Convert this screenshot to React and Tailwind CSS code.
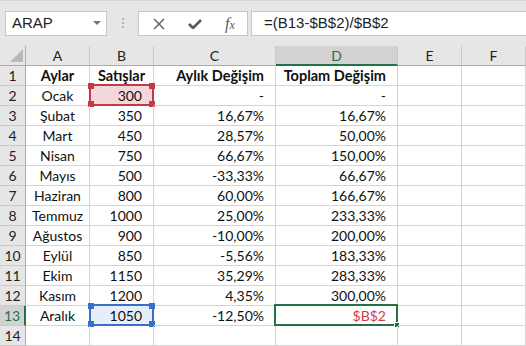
import React from "react";

const cols = [
  { key: "A", w: "w-[64px]" },
  { key: "B", w: "w-[64px]" },
  { key: "C", w: "w-[122px]" },
  { key: "D", w: "w-[122px]" },
  { key: "E", w: "w-[64px]" },
  { key: "F", w: "w-[64px]" },
];

const rows = [
  ["Ocak", "300", "-", "-"],
  ["Şubat", "350", "16,67%", "16,67%"],
  ["Mart", "450", "28,57%", "50,00%"],
  ["Nisan", "750", "66,67%", "150,00%"],
  ["Mayıs", "500", "-33,33%", "66,67%"],
  ["Haziran", "800", "60,00%", "166,67%"],
  ["Temmuz", "1000", "25,00%", "233,33%"],
  ["Ağustos", "900", "-10,00%", "200,00%"],
  ["Eylül", "850", "-5,56%", "183,33%"],
  ["Ekim", "1150", "35,29%", "283,33%"],
  ["Kasım", "1200", "4,35%", "300,00%"],
  ["Aralık", "1050", "-12,50%", "$B$2"],
];

const Handle = ({ pos, color }) => (
  <span className={`absolute w-[6px] h-[6px] ${color} ${pos}`} />
);

function SelBox({ border, fill, handles, className }) {
  return (
    <div className={`absolute pointer-events-none border-2 ${border} ${fill} ${className}`}>
      <Handle pos="-left-[3px] -top-[3px]" color={handles} />
      <Handle pos="-right-[3px] -top-[3px]" color={handles} />
      <Handle pos="-left-[3px] -bottom-[3px]" color={handles} />
      <Handle pos="-right-[3px] -bottom-[3px]" color={handles} />
    </div>
  );
}

function FormulaBar() {
  return (
    <div className="h-[46px] bg-[#e6e6e6] border-t border-[#d6d6d6] flex items-start pt-[10px] pl-[5px]">
      {/* name box */}
      <div className="w-[102px] h-[25px] bg-white border border-[#c6c6c6] flex items-center pl-[6px] pr-[5px] justify-between">
        <span className="text-[15px] text-[#222]" style={{ fontFamily: "'Liberation Sans', Arial, sans-serif" }}>ARAP</span>
        <svg width="8" height="5" viewBox="0 0 8 5"><path d="M0 0h8L4 4z" fill="#777" /></svg>
      </div>
      <div className="w-[31px] flex flex-col items-center gap-[2px] pt-[7px]">
        <span className="w-[2px] h-[2px] bg-[#b4b4b4]" />
        <span className="w-[2px] h-[2px] bg-[#b4b4b4]" />
        <span className="w-[2px] h-[2px] bg-[#b4b4b4]" />
      </div>
      {/* buttons */}
      <div className="w-[110px] h-[25px] bg-white border border-[#c6c6c6] flex items-center">
        <div className="w-[38px] flex justify-center pl-[2px]">
          <svg width="12" height="12" viewBox="0 0 12 12">
            <path d="M1 1L11 11M11 1L1 11" stroke="#6a6a6a" strokeWidth="1.6" />
          </svg>
        </div>
        <div className="w-[36px] flex justify-center">
          <svg width="14" height="10" viewBox="0 0 14 10">
            <path d="M1 5l4 4L13 1" stroke="#5c5c5c" strokeWidth="2.8" fill="none" />
          </svg>
        </div>
        <div className="w-[34px] flex justify-center">
          <span className="italic text-[16px] text-[#5c5c5c] leading-none" style={{ fontFamily: "'Liberation Serif', 'Times New Roman', serif" }}>
            f<span className="text-[12px]">x</span>
          </span>
        </div>
      </div>
      <div className="flex-1 ml-[3px] h-[25px] bg-white border-y border-l border-[#c6c6c6] flex items-center pl-[12px]">
        <span className="text-[15px] text-[#222]" style={{ fontFamily: "'Liberation Sans', Arial, sans-serif" }}>=(B13-$B$2)/$B$2</span>
      </div>
    </div>
  );
}

function HeaderRow() {
  return (
    <div className="flex h-[20px]">
      <div className="relative w-[26px] bg-[#e6e6e6] border-r border-b border-[#ababab]">
        <svg className="absolute left-[10px] top-[3px]" width="13" height="13" viewBox="0 0 13 13">
          <path d="M13 0V13H0z" fill="#b8b8b8" />
        </svg>
      </div>
      {cols.map((c) => (
        <div
          key={c.key}
          className={`${c.w} flex items-center justify-center border-r border-r-[#c9c9c9] text-[14px] ${
            c.key === "D"
              ? "bg-[#d2d2d2] border-b-2 border-b-[#217346] text-[#217346]"
              : "bg-[#e6e6e6] border-b border-b-[#ababab] text-[#222]"
          }`}
        >
          {c.key}
        </div>
      ))}
    </div>
  );
}

function Cell({ w, align, bold, children, extra }) {
  return (
    <div
      className={`relative ${w} h-[20px] border-r border-b border-[#d4d4d4] flex items-center ${
        align === "center" ? "justify-center" : "justify-end pr-[11px]"
      } ${bold ? "font-bold text-[14.5px]" : ""}`}
    >
      {extra}
      <span className="relative">{children}</span>
    </div>
  );
}

function RowHead({ n, active }) {
  return (
    <div
      className={`w-[26px] h-[20px] flex items-center justify-center border-b border-[#c9c9c9] ${
        active
          ? "bg-[#d2d2d2] text-[#217346] border-r-2 border-r-[#217346]"
          : "bg-[#e6e6e6] text-[#222] border-r border-r-[#ababab]"
      }`}
    >
      {n}
    </div>
  );
}

export default function App() {
  return (
    <div className="w-[526px] h-[346px] overflow-hidden bg-white text-[14px] text-[#111]" style={{ fontFamily: "Lato, 'Open Sans', sans-serif" }}>
      <FormulaBar />
      <HeaderRow />

      {/* row 1 */}
      <div className="flex">
        <RowHead n={1} />
        <Cell w="w-[64px]" align="center" bold>Aylar</Cell>
        <Cell w="w-[64px]" align="center" bold>Satışlar</Cell>
        <Cell w="w-[122px]" bold>Aylık Değişim</Cell>
        <Cell w="w-[122px]" bold>Toplam Değişim</Cell>
        <Cell w="w-[64px]" />
        <Cell w="w-[64px]" />
      </div>

      {rows.map((r, i) => {
        const n = i + 2;
        const last = n === 13;
        return (
          <div className="flex" key={n}>
            <RowHead n={n} active={last} />
            <Cell w="w-[64px]" align="center">{r[0]}</Cell>
            <Cell
              w="w-[64px]"
              extra={
                n === 2 ? (
                  <SelBox border="border-[#c23a48]" fill="bg-[#f3d8db]" handles="bg-[#c23a48]" className="-left-[1px] -top-[2px] w-[65px] h-[22px]" />
                ) : last ? (
                  <SelBox border="border-[#3a6fc8]" fill="bg-[#e6eef9]" handles="bg-[#3a6fc8]" className="-left-[1px] -top-[2px] w-[65px] h-[22px]" />
                ) : null
              }
            >
              {r[1]}
            </Cell>
            <Cell w="w-[122px]">{r[2]}</Cell>
            <Cell
              w="w-[122px]"
              extra={
                last ? (
                  <div className="absolute -left-[2px] -top-[2px] w-[124px] h-[22px] border-2 border-[#217346]">
                    <span className="absolute -right-[4px] -bottom-[4px] w-[6px] h-[6px] bg-[#217346] border border-white" />
                  </div>
                ) : null
              }
            >
              {last ? <span className="text-[#d13a4a]">{r[3]}</span> : r[3]}
            </Cell>
            <Cell w="w-[64px]" />
            <Cell w="w-[64px]" />
          </div>
        );
      })}

      {/* row 14 */}
      <div className="flex">
        <RowHead n={14} />
        {cols.map((c) => (
          <Cell key={c.key} w={c.w} />
        ))}
      </div>
    </div>
  );
}
